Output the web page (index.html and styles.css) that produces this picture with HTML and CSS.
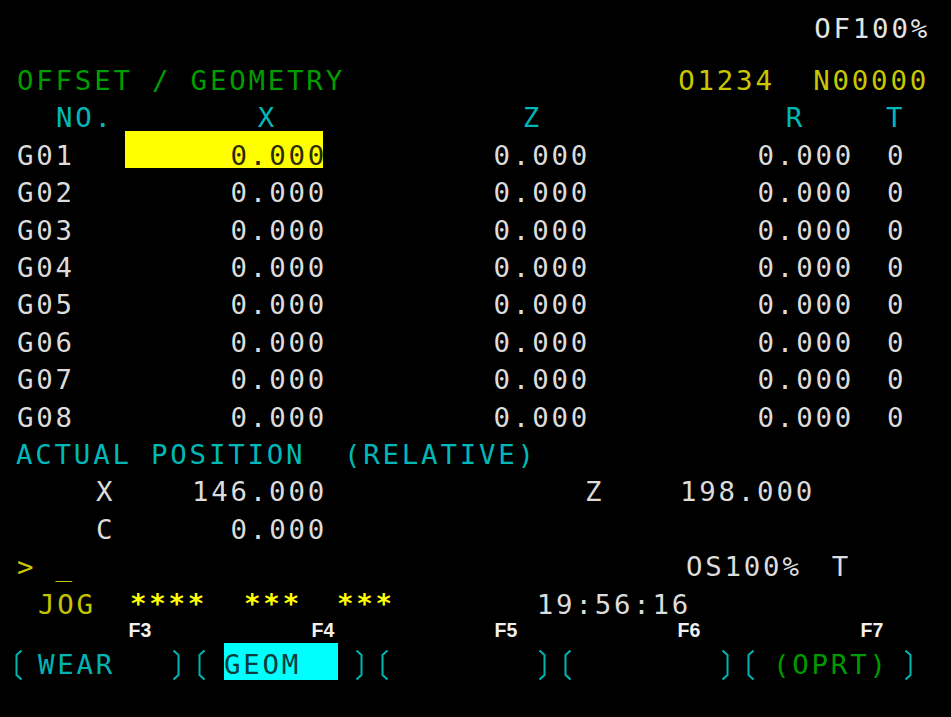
FILE: index.html
```html
<!DOCTYPE html>
<html>
<head>
<meta charset="utf-8">
<link rel="stylesheet" href="styles.css">
</head>
<body>
<div class="screen">
  <div class="row top"><span class="white">OF100%</span></div>
  <div class="row title"><span class="green">OFFSET / GEOMETRY</span><span class="yellow">O1234  N00000</span></div>
  <div class="row tbl head cyan">
    <span class="hno">NO.</span><span class="r hx">X</span><span class="r hz">Z</span><span class="r hr">R</span><span class="ht">T</span>
  </div>
  <div class="row tbl"><span>G01</span><span class="r sel">0.000</span><span class="r">0.000</span><span class="r">0.000</span><span class="tv">0</span></div>
  <div class="row tbl"><span>G02</span><span class="r">0.000</span><span class="r">0.000</span><span class="r">0.000</span><span class="tv">0</span></div>
  <div class="row tbl"><span>G03</span><span class="r">0.000</span><span class="r">0.000</span><span class="r">0.000</span><span class="tv">0</span></div>
  <div class="row tbl"><span>G04</span><span class="r">0.000</span><span class="r">0.000</span><span class="r">0.000</span><span class="tv">0</span></div>
  <div class="row tbl"><span>G05</span><span class="r">0.000</span><span class="r">0.000</span><span class="r">0.000</span><span class="tv">0</span></div>
  <div class="row tbl"><span>G06</span><span class="r">0.000</span><span class="r">0.000</span><span class="r">0.000</span><span class="tv">0</span></div>
  <div class="row tbl"><span>G07</span><span class="r">0.000</span><span class="r">0.000</span><span class="r">0.000</span><span class="tv">0</span></div>
  <div class="row tbl"><span>G08</span><span class="r">0.000</span><span class="r">0.000</span><span class="r">0.000</span><span class="tv">0</span></div>
  <div class="row actual"><span class="cyan">ACTUAL POSITION  (RELATIVE)</span></div>
  <div class="row pos"><span class="axis">X</span><span class="r">146.000</span><span class="axis2">Z</span><span class="r">198.000</span></div>
  <div class="row pos"><span class="axis">C</span><span class="r">0.000</span></div>
  <div class="row cmd"><span class="yellow">&gt; _</span><span class="os">OS100%</span><span class="tt">T</span></div>
  <div class="row status">
    <span class="jog">JOG</span><span class="stars s1">****</span><span class="stars s2">***</span><span class="stars s3">***</span><span class="time">19:56:16</span>
  </div>
  <div class="frow"><span>F3</span><span>F4</span><span>F5</span><span>F6</span><span>F7</span></div>
  <div class="keys">
    <div class="key">
      <svg class="br" viewBox="0 0 7 30"><polyline points="6.5,0.5 1.5,5 1.5,25 6.5,29.5"/></svg>
      <span class="lbl wear">WEAR</span>
      <svg class="br" viewBox="0 0 7 30"><polyline points="0.5,0.5 5.5,5 5.5,25 0.5,29.5"/></svg>
    </div>
    <div class="key">
      <svg class="br" viewBox="0 0 7 30"><polyline points="6.5,0.5 1.5,5 1.5,25 6.5,29.5"/></svg>
      <span class="lbl on">GEOM</span>
      <svg class="br" viewBox="0 0 7 30"><polyline points="0.5,0.5 5.5,5 5.5,25 0.5,29.5"/></svg>
    </div>
    <div class="key">
      <svg class="br" viewBox="0 0 7 30"><polyline points="6.5,0.5 1.5,5 1.5,25 6.5,29.5"/></svg>
      <span class="lbl"></span>
      <svg class="br" viewBox="0 0 7 30"><polyline points="0.5,0.5 5.5,5 5.5,25 0.5,29.5"/></svg>
    </div>
    <div class="key">
      <svg class="br" viewBox="0 0 7 30"><polyline points="6.5,0.5 1.5,5 1.5,25 6.5,29.5"/></svg>
      <span class="lbl"></span>
      <svg class="br" viewBox="0 0 7 30"><polyline points="0.5,0.5 5.5,5 5.5,25 0.5,29.5"/></svg>
    </div>
    <div class="key">
      <svg class="br" viewBox="0 0 7 30"><polyline points="6.5,0.5 1.5,5 1.5,25 6.5,29.5"/></svg>
      <span class="lbl oprt">(OPRT)</span>
      <svg class="br" viewBox="0 0 7 30"><polyline points="0.5,0.5 5.5,5 5.5,25 0.5,29.5"/></svg>
    </div>
  </div>
</div>
</body>
</html>
```
FILE: styles.css
```css
html, body {
  margin: 0;
  padding: 0;
  background: #000;
}

.screen {
  width: 951px;
  height: 717px;
  overflow: hidden;
  background: #000;
  padding-top: 4px;
  box-sizing: border-box;
  font-family: "DejaVu Sans Mono", "Liberation Mono", monospace;
  font-size: 27.4px;
  letter-spacing: 2.8px;
  color: #dcdcdc;
}

.row {
  display: flex;
  height: 37.43px;
  white-space: pre;
}

.row > span {
  padding-top: 11.7px;
  line-height: 25.73px;
  box-sizing: border-box;
}

.white { color: #e4e4e4; }
.green { color: #009c00; }
.cyan { color: #00b8b8; }
.yellow { color: #c8c800; }

.top {
  height: 52.14px;
  justify-content: flex-end;
  padding-right: 21px;
}

.title {
  justify-content: space-between;
  padding-left: 17px;
  padding-right: 22px;
}

.tbl {
  display: grid;
  grid-template-columns: 108px 198px 263px 264px 1fr;
  padding-left: 17px;
}

.r {
  text-align: right;
}

.r::after {
  content: "";
  margin-right: -4px;
}

.sel {
  background: #ffff00;
  color: #2a2a00;
}

.hno { padding-left: 39px; }
.hx { padding-right: 50px; }
.hz { padding-right: 48px; }
.hr { padding-right: 49px; }
.ht { padding-left: 36px; }
.tv { padding-left: 37px; }

.actual {
  padding-left: 16px;
}

.pos {
  display: grid;
  grid-template-columns: 108px 198px 284px 204px;
  padding-left: 17px;
}

.axis { padding-left: 79px; }
.axis2 { padding-left: 262px; }

.cmd {
  padding-left: 17px;
}

.cmd .os {
  margin-left: auto;
}

.cmd .tt {
  margin-left: 30px;
  margin-right: 100px;
}

.status {
  padding-left: 17px;
}

.jog {
  margin-left: 21px;
  color: #c4c400;
}

.row > .stars {
  color: #ffff00;
  font-weight: bold;
  padding-top: 0;
  height: 14px;
  line-height: 14px;
  margin-top: 16.9px;
}

.s1 { margin-left: 34px; }
.s2 { margin-left: 37px; }
.s3 { margin-left: 35px; }

.time {
  margin-left: 142px;
}

.frow {
  display: grid;
  grid-template-columns: repeat(5, 183px);
  padding-left: 128.6px;
  height: 22.4px;
  box-sizing: border-box;
  padding-top: 1.6px;
  font: bold 19.5px/22px "Liberation Sans", Arial, sans-serif;
  letter-spacing: 0;
  color: #f0f0f0;
}

.keys {
  display: flex;
  gap: 18px;
  padding-left: 15px;
  margin-top: 3px;
  white-space: pre;
}

.key {
  display: flex;
  width: 165px;
  height: 37px;
}

.br {
  flex: none;
  width: 7px;
  height: 30px;
  margin-top: 7px;
}

.br polyline {
  fill: none;
  stroke: #00b4b4;
  stroke-width: 2;
}

.lbl {
  flex: none;
  width: 114px;
  height: 37px;
  margin: 0 18px 0 19px;
  padding-top: 8.1px;
  line-height: 28.9px;
  box-sizing: border-box;
}

.wear {
  color: #00b4b4;
  text-indent: -3px;
}

.on {
  background: #00ffff;
  color: #0a3c3c;
}

.oprt {
  color: #009a00;
}
```
